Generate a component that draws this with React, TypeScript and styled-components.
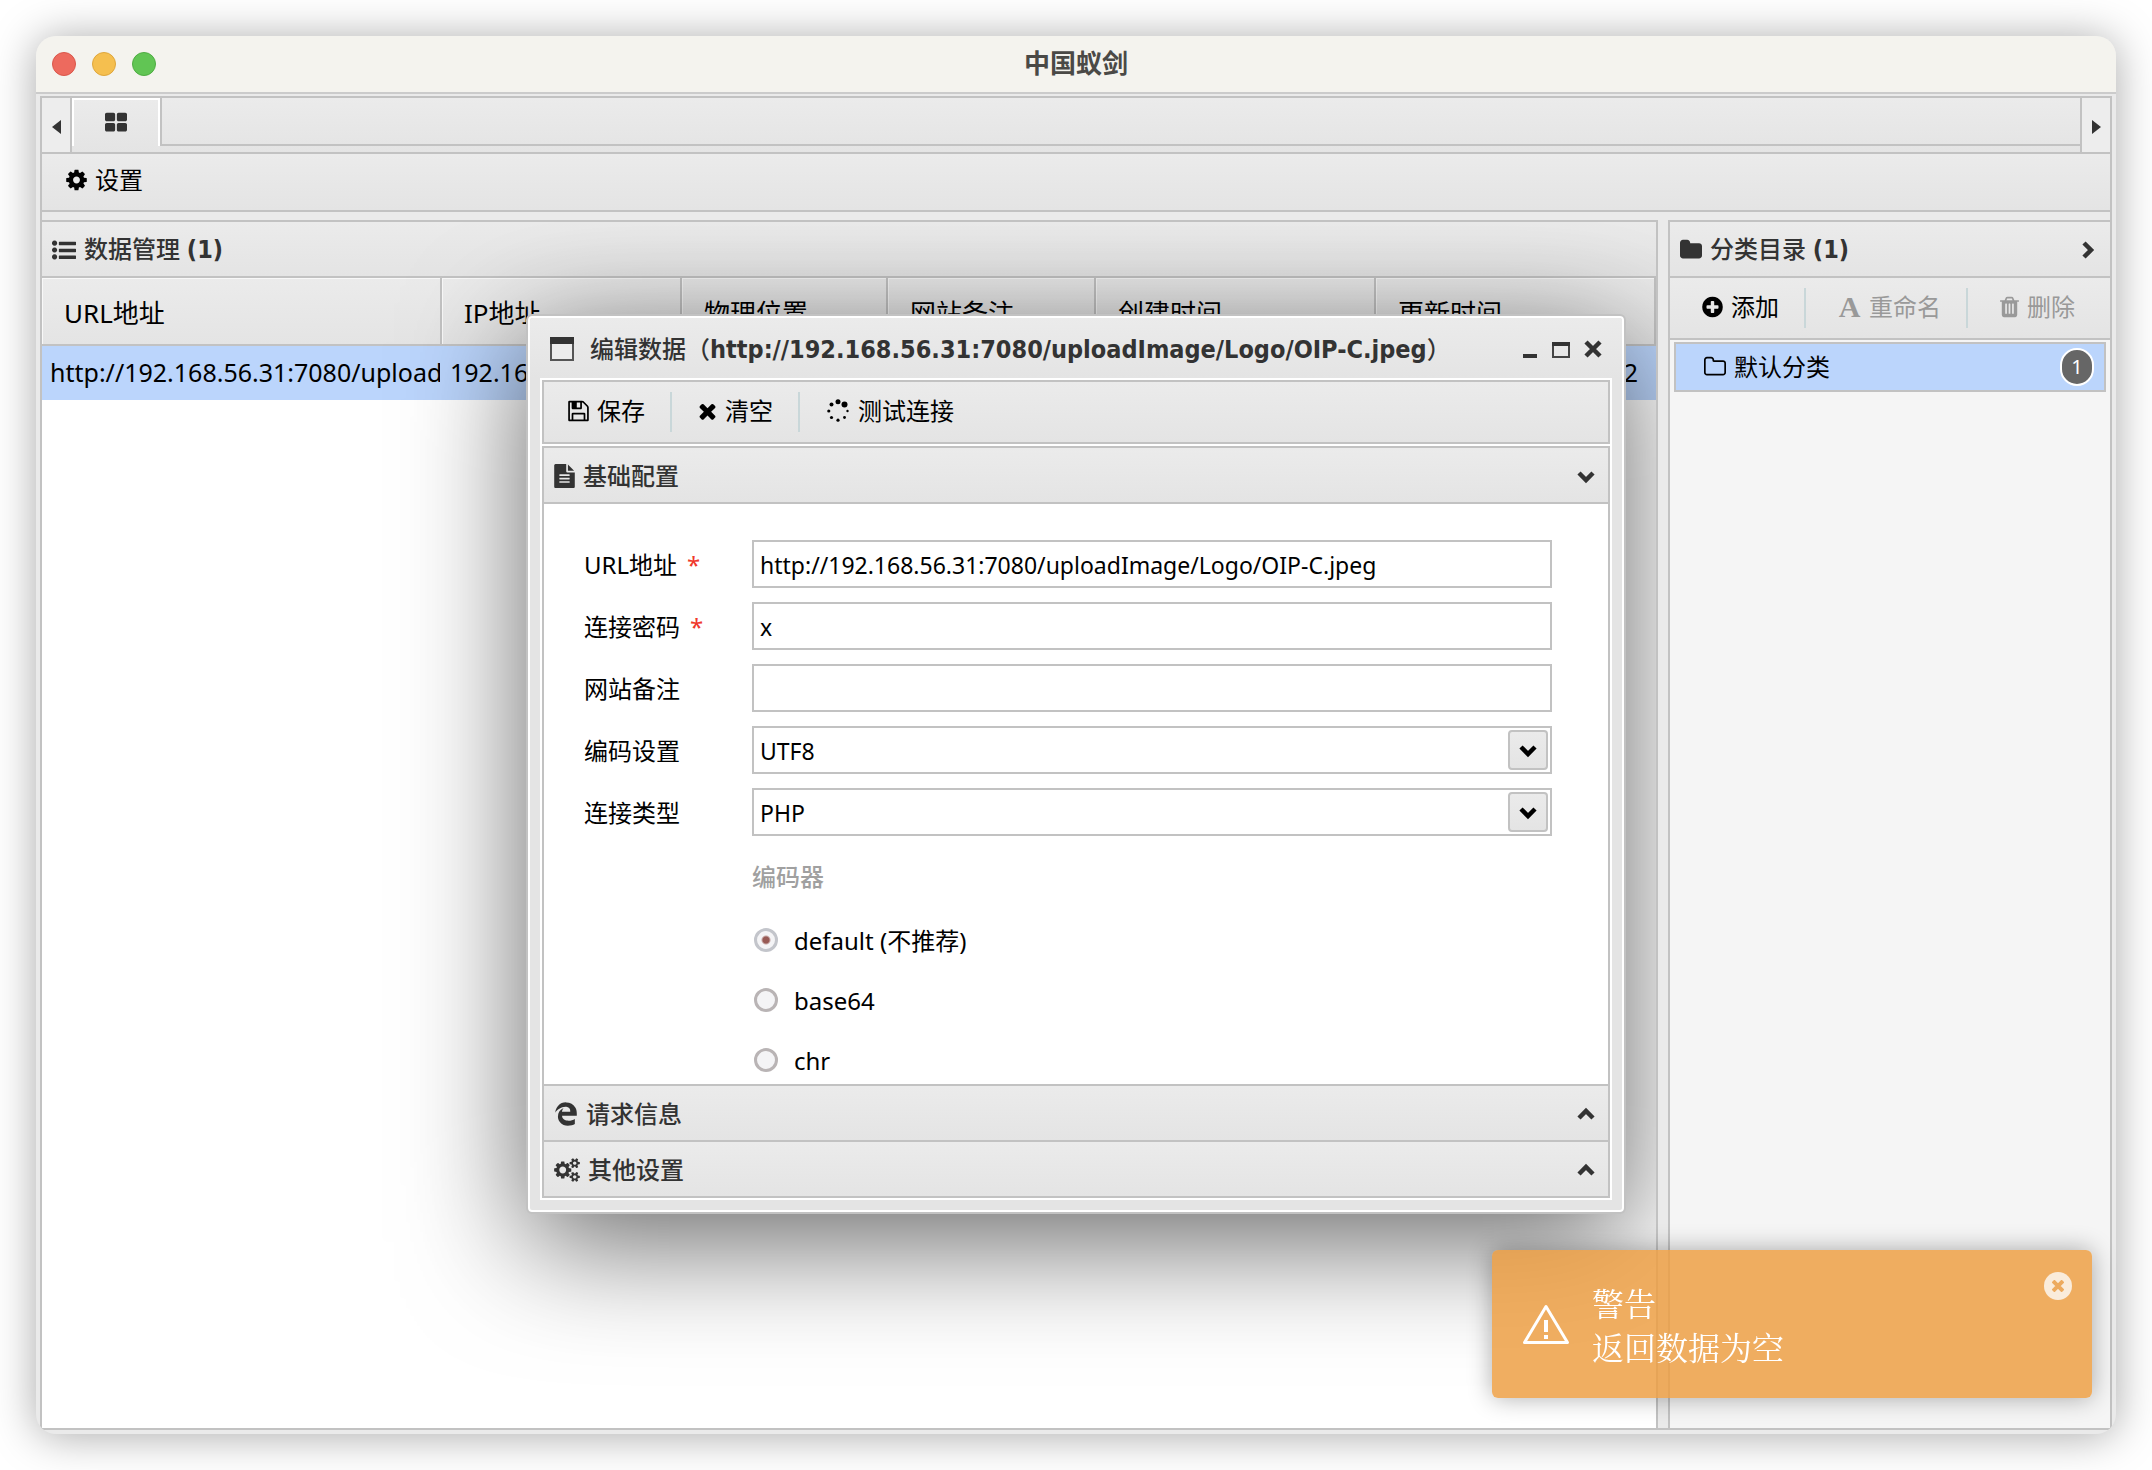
import React, { useState } from "react";
import styled, { createGlobalStyle, css } from "styled-components";
import { FaEdgeLegacy } from "react-icons/fa";

const line = "#c2c2c2";
const sans = '"Noto Sans", "Noto Sans CJK SC", sans-serif';
const strong = '"DejaVu Sans Condensed", "Noto Sans CJK SC", sans-serif';
const bar = "linear-gradient(#ebebeb, #e4e4e4)";

const GlobalStyle = createGlobalStyle`
  *, *::before, *::after { box-sizing: border-box; }
  body { margin: 0; background: #fff; font-family: ${sans}; font-size: 24px; line-height: 32px; color: #000; }
  button, input, select { font: inherit; color: inherit; margin: 0; }
  svg { display: block; flex: none; }
`;

/* ---------- icons ---------- */

const glyphs = {
  cog: [1536, "M1152 896q0-106-75-181t-181-75-181 75-75 181 75 181 181 75 181-75 75-181zm512-109v222q0 12-8 23t-20 13l-185 28q-19 54-39 91 35 50 107 138 10 12 10 25t-9 23q-27 37-99 108t-94 71q-12 0-26-9l-138-108q-44 23-91 38-16 136-29 186-7 28-36 28h-222q-14 0-24.5-8.5t-11.5-21.5l-28-184q-49-16-90-37l-141 107q-10 9-25 9-14 0-25-11-126-114-165-168-7-10-7-23 0-12 8-23 15-21 51-66.5t54-70.5q-27-50-41-99l-183-27q-13-2-21-12.5t-8-23.5v-222q0-12 8-23t19-13l186-28q14-46 39-92-40-57-107-138-10-12-10-24 0-10 9-23 26-36 98.5-107.5t94.5-71.5q13 0 26 10l138 107q44-23 91-38 16-136 29-186 7-28 36-28h222q14 0 24.5 8.5t11.5 21.5l28 184q49 16 90 37l142-107q9-9 24-9 13 0 25 10 129 119 165 170 7 8 7 22 0 12-8 23-15 21-51 66.5t-54 70.5q26 50 41 98l183 28q13 2 21 12.5t8 23.5z"],
  grid: [1664, "M832 1024v384q0 52-38 90t-90 38h-512q-52 0-90-38t-38-90v-384q0-52 38-90t90-38h512q52 0 90 38t38 90zm0-768v384q0 52-38 90t-90 38h-512q-52 0-90-38t-38-90v-384q0-52 38-90t90-38h512q52 0 90 38t38 90zm896 768v384q0 52-38 90t-90 38h-512q-52 0-90-38t-38-90v-384q0-52 38-90t90-38h512q52 0 90 38t38 90zm0-768v384q0 52-38 90t-90 38h-512q-52 0-90-38t-38-90v-384q0-52 38-90t90-38h512q52 0 90 38t38 90z"],
  list: [1792, "M192 1216a192 192 0 1 0 0.1 0zM192 704a192 192 0 1 0 0.1 0zM192 192a192 192 0 1 0 0.1 0zM544 1312h1216q32 0 32 32v192q0 32-32 32h-1216q-32 0-32-32v-192q0-32 32-32zM544 800h1216q32 0 32 32v192q0 32-32 32h-1216q-32 0-32-32v-192q0-32 32-32zM544 288h1216q32 0 32 32v192q0 32-32 32h-1216q-32 0-32-32v-192q0-32 32-32z"],
  folder: [1664, "M1728 608v704q0 92-66 158t-158 66h-1216q-92 0-158-66t-66-158v-960q0-92 66-158t158-66h320q92 0 158 66t66 158v32h672q92 0 158 66t66 158z"],
  folderOpen: [1664, "M1600 1312v-704q0-40-28-68t-68-28h-704q-40 0-68-28t-28-68v-64q0-40-28-68t-68-28h-320q-40 0-68 28t-28 68v960q0 40 28 68t68 28h1216q40 0 68-28t28-68zm128-704v704q0 92-66 158t-158 66h-1216q-92 0-158-66t-66-158v-960q0-92 66-158t158-66h320q92 0 158 66t66 158v32h672q92 0 158 66t66 158z"],
  plus: [1536, "M1344 960v-128q0-26-19-45t-45-19h-256v-256q0-26-19-45t-45-19h-128q-26 0-45 19t-19 45v256h-256q-26 0-45 19t-19 45v128q0 26 19 45t45 19h256v256q0 26 19 45t45 19h128q26 0 45-19t19-45v-256h256q26 0 45-19t19-45zm320-64q0 209-103 385.5t-279.5 279.5-385.5 103-385.5-103-279.5-279.5-103-385.5 103-385.5 279.5-279.5 385.5-103 385.5 103 279.5 279.5 103 385.5z"],
  times: [1408, "M1490 1322q0 40-28 68l-136 136q-28 28-68 28t-68-28l-294-294-294 294q-28 28-68 28t-68-28l-136-136q-28-28-28-68t28-68l294-294-294-294q-28-28-28-68t28-68l136-136q28-28 68-28t68 28l294 294 294-294q28-28 68-28t68 28l136 136q28 28 28 68t-28 68l-294 294 294 294q28 28 28 68z"],
  save: [1536, "M512 1536h768v-384h-768v384zm896 0h128v-896q0-14-10-38.5t-20-34.5l-281-281q-10-10-34-20t-39-10v416q0 40-28 68t-68 28h-576q-40 0-68-28t-28-68v-416h-128v1280h128v-416q0-40 28-68t68-28h832q40 0 68 28t28 68v416zm-384-928v-320q0-13-9.500-22.500t-22.500-9.500h-192q-13 0-22.500 9.500t-9.500 22.500v320q0 13 9.500 22.500t22.500 9.500h192q13 0 22.500-9.500t9.500-22.500zm640 32v928q0 40-28 68t-68 28h-1344q-40 0-68-28t-28-68v-1344q0-40 28-68t68-28h928q40 0 88 20t76 48l280 280q28 28 48 76t20 88z"],
  file: [1536, "M1596 476q14 14 28 36h-472v-472q22 14 36 28zm-476 164h544v1056q0 40-28 68t-68 28h-1344q-40 0-68-28t-28-68v-1600q0-40 28-68t68-28h800v544q0 40 28 68t68 28zm160 736v-64q0-14-9-23t-23-9h-704q-14 0-23 9t-9 23v64q0 14 9 23t23 9h704q14 0 23-9t9-23zm0-256v-64q0-14-9-23t-23-9h-704q-14 0-23 9t-9 23v64q0 14 9 23t23 9h704q14 0 23-9t9-23zm0-256v-64q0-14-9-23t-23-9h-704q-14 0-23 9t-9 23v64q0 14 9 23t23 9h704q14 0 23-9t9-23z"],
  trash: [1408, "M704 1376v-704q0-14-9-23t-23-9h-64q-14 0-23 9t-9 23v704q0 14 9 23t23 9h64q14 0 23-9t9-23zm256 0v-704q0-14-9-23t-23-9h-64q-14 0-23 9t-9 23v704q0 14 9 23t23 9h64q14 0 23-9t9-23zm256 0v-704q0-14-9-23t-23-9h-64q-14 0-23 9t-9 23v704q0 14 9 23t23 9h64q14 0 23-9t9-23zm-544-992h448l-48-117q-7-9-17-11h-317q-10 2-17 11zm928 32v64q0 14-9 23t-23 9h-96v948q0 83-47 143.500t-113 60.500h-832q-66 0-113-58.500t-47-141.500v-952h-96q-14 0-23-9t-9-23v-64q0-14 9-23t23-9h309l70-167q15-37 54-63t79-26h320q40 0 79 26t54 63l70 167h309q14 0 23 9t9 23z"],
} as const;

type GlyphName = keyof typeof glyphs;

function Glyph({ name }: { name: GlyphName }) {
  const [width, d] = glyphs[name];
  return (
    <svg
      width={Math.round((width / 1792) * 24)}
      height={24}
      viewBox={`${(1792 - width) / 2} 0 ${width} 1792`}
      fill="currentColor"
      aria-hidden="true"
    >
      <path d={d} />
    </svg>
  );
}

const cogsPath =
  "M896 896q0-106-75-181t-181-75-181 75-75 181 75 181 181 75 181-75 75-181zm768 512q0-52-38-90t-90-38-90 38-38 90q0 53 37.5 90.5t90.5 37.5 90.5-37.5 37.5-90.5zm0-1024q0-52-38-90t-90-38-90 38-38 90q0 53 37.5 90.5t90.5 37.5 90.5-37.5 37.5-90.5zm-384 421v185q0 10-7 19.5t-16 10.5l-155 24q-11 35-32 76 34 48 90 115 7 11 7 20 0 12-7 19-23 30-82.5 89.5t-78.5 59.5q-11 0-21-7l-115-90q-37 19-77 31-11 108-23 155-7 24-30 24h-186q-11 0-20-7.5t-10-17.5l-23-153q-34-10-75-31l-118 89q-7 7-20 7-11 0-21-8-144-133-144-160 0-9 7-19 10-14 41-53t47-61q-23-44-35-82l-152-24q-10-1-17-9.5t-7-19.5v-185q0-10 7-19.5t16-10.5l155-24q11-35 32-76-34-48-90-115-7-11-7-20 0-12 7-20 22-30 82-89t79-59q11 0 21 7l115 90q34-18 77-32 11-108 23-154 7-24 30-24h186q11 0 20 7.5t10 17.5l23 153q34 10 75 31l118-89q8-7 20-7 11 0 21 8 144 133 144 160 0 8-7 19-12 16-42 54t-45 60q23 48 34 82l152 23q10 2 17 10.5t7 19.5zm640 533v140q0 16-149 31-12 27-30 52 51 113 51 138 0 4-4 7-122 71-124 71-8 0-46-47t-52-68q-20 2-30 2t-30-2q-14 21-52 68t-46 47q-2 0-124-71-4-3-4-7 0-25 51-138-18-25-30-52-149-15-149-31v-140q0-16 149-31 13-29 30-52-51-113-51-138 0-4 4-7 4-2 35-20t59-34 30-16q8 0 46 46.5t52 67.5q20-2 30-2t30 2q51-71 92-112l6-2q4 0 124 70 4 3 4 7 0 25-51 138 17 23 30 52 149 15 149 31zm0-1024v140q0 16-149 31-12 27-30 52 51 113 51 138 0 4-4 7-122 71-124 71-8 0-46-47t-52-68q-20 2-30 2t-30-2q-14 21-52 68t-46 47q-2 0-124-71-4-3-4-7 0-25 51-138-18-25-30-52-149-15-149-31v-140q0-16 149-31 13-29 30-52-51-113-51-138 0-4 4-7 4-2 35-20t59-34 30-16q8 0 46 46.5t52 67.5q20-2 30-2t30 2q51-71 92-112l6-2q4 0 124 70 4 3 4 7 0 25-51 138 17 23 30 52 149 15 149 31z";

const CogsIcon = () => (
  <svg width={26} height={24} viewBox="0 0 1920 1792" fill="currentColor" aria-hidden="true">
    <path d={cogsPath} />
  </svg>
);

const SpinnerIcon = () => (
  <svg width={24} height={24} viewBox="0 0 24 24" fill="currentColor" aria-hidden="true">
    <circle cx="12" cy="2.800" r="2.500" />
    <circle cx="18.500" cy="5.500" r="3" />
    <circle cx="21.500" cy="12" r="1.200" />
    <circle cx="18.500" cy="18.500" r="1.400" />
    <circle cx="12" cy="21.200" r="1.600" />
    <circle cx="5.500" cy="18.500" r="1.600" />
    <circle cx="2.800" cy="12" r="1.600" />
    <circle cx="5.500" cy="5.500" r="2" />
  </svg>
);

const WindowIcon = () => (
  <svg width={24} height={24} viewBox="0 0 24 24" aria-hidden="true">
    <rect x="1" y="1" width="22" height="22" fill="#ececec" stroke="#555" strokeWidth="2" />
    <rect width="24" height="7" fill="#333" />
  </svg>
);

const Chevron = ({ dir, color = "#333" }: { dir: "up" | "down" | "right"; color?: string }) => {
  const points = { up: "3,14 10,7 17,14", down: "3,7 10,14 17,7", right: "6,3 13,10 6,17" }[dir];
  return (
    <svg width={20} height={20} viewBox="0 0 20 20" fill="none" stroke={color} strokeWidth="4.500" aria-hidden="true">
      <polyline points={points} />
    </svg>
  );
};

const Triangle = ({ dir }: { dir: "left" | "right" }) => (
  <svg width={9} height={14} viewBox="0 0 9 14" fill="#333" aria-hidden="true">
    <path d={dir === "left" ? "M9 0v14L0 7z" : "M0 0v14l9-7z"} />
  </svg>
);

/* ---------- application window ---------- */

const Frame = styled.div`
  margin: 36px;
  min-height: calc(100vh - 72px);
  display: flex;
  flex-direction: column;
  border-radius: 20px;
  overflow: clip;
  background: #eaeaea;
  box-shadow: 0 2px 44px rgba(0, 0, 0, 0.34);
`;

const Backdrop = styled.div`
  display: flow-root;
`;

const TitleBar = styled.header`
  display: grid;
  grid-template-columns: 1fr auto 1fr;
  align-items: center;
  height: 58px;
  padding: 0 16px;
  background: #f4f3ee;
  border-bottom: 2px solid #cbcbcb;
`;

const Lights = styled.div`
  display: flex;
  gap: 16px;
`;

const Light = styled.button<{ $fill: string; $edge: string }>`
  width: 24px;
  height: 24px;
  padding: 0;
  border: 1px solid ${(p) => p.$edge};
  border-radius: 50%;
  background: ${(p) => p.$fill};
`;

const AppTitle = styled.h1`
  margin: 0;
  padding-bottom: 2px;
  font-size: 26px;
  font-weight: 700;
  line-height: 36px;
  color: #4a4946;
`;

const Shell = styled.main`
  flex: 1;
  display: flex;
  flex-direction: column;
  margin: 2px 4px 4px;
  border: 2px solid ${line};
`;

const TabStrip = styled.nav`
  display: flex;
  height: 56px;
  border-bottom: 2px solid ${line};
  background: ${bar};
`;

const Scroller = styled.button<{ $side: "left" | "right" }>`
  display: flex;
  align-items: center;
  justify-content: center;
  width: 30px;
  padding: 4px 0 0;
  border: 0;
  border-${(p) => (p.$side === "left" ? "right" : "left")}: 2px solid ${line};
  background: #ededed;
`;

const TabButton = styled.button`
  display: flex;
  align-items: center;
  justify-content: center;
  width: 88px;
  height: 48px;
  padding: 0;
  border: 2px solid #fff;
  border-bottom: 0;
  background: transparent;
  color: #333;
  box-shadow: 2px 0 0 ${line};
`;

const TabRest = styled.div`
  flex: 1;
  height: 48px;
  margin-left: 2px;
  border-bottom: 2px solid ${line};
`;

const Toolbar = styled.div<{ $height: number }>`
  display: flex;
  align-items: center;
  height: ${(p) => p.$height}px;
  border-bottom: 2px solid ${line};
  background: ${bar};
`;

const MenuBar = styled(Toolbar)`
  padding-bottom: 2px;
`;

const ToolButton = styled.button<{ $left: number }>`
  display: flex;
  align-items: center;
  gap: 8px;
  height: 40px;
  padding: 0 25px 2px ${(p) => p.$left}px;
  border: 0;
  background: transparent;
  white-space: nowrap;
  &:disabled {
    color: #999;
  }
  & + & {
    border-left: 2px solid #c9d7d9;
  }
`;

const LetterIcon = styled.span`
  width: 23px;
  font: bold 30px/24px "Liberation Serif", serif;
  text-align: center;
`;

const Columns = styled.div`
  flex: 1;
  display: flex;
  gap: 10px;
  padding-top: 8px;
`;

const DataPane = styled.section`
  position: relative;
  flex: 1;
  min-width: 0;
  overflow: hidden;
  border-top: 2px solid ${line};
  border-right: 2px solid ${line};
  background: #fff;
`;

const SidePane = styled.aside`
  flex: none;
  width: 442px;
  border-top: 2px solid ${line};
  border-left: 2px solid ${line};
  background: #f5f5f5;
`;

const heading = css`
  font-family: ${strong};
  font-size: 24px;
  font-weight: 500;
  line-height: 32px;
  color: #333;
  b {
    font-size: 25px;
    font-weight: 700;
  }
`;

const PaneTitle = styled.h2`
  display: flex;
  align-items: center;
  gap: 8px;
  height: 56px;
  margin: 0;
  padding: 2px 12px 0 10px;
  border-bottom: 2px solid ${line};
  background: ${bar};
  ${heading}
`;

const Caption = styled.span`
  flex: 1;
`;

const PlainButton = styled.button`
  display: flex;
  padding: 0;
  border: 0;
  background: none;
`;

const Grid = styled.table`
  width: 100%;
  table-layout: fixed;
  border-collapse: separate;
  border-spacing: 0;
  font-size: 26px;
  line-height: 36px;
`;

const HeadCell = styled.th`
  height: 68px;
  padding: 4px 0 0 22px;
  border-right: 2px solid ${line};
  border-bottom: 2px solid ${line};
  box-shadow: inset 1px 1px 0 #f8f8f8;
  background: ${bar};
  font-weight: 400;
  text-align: left;
  white-space: nowrap;
`;

const Cell = styled.td<{ $end?: boolean }>`
  height: 54px;
  padding: 0 ${(p) => (p.$end ? 16 : 0)}px 2px 8px;
  border-right: 2px solid transparent;
  background: #bbd5fc;
  background-clip: border-box;
  font-size: 25px;
  text-align: ${(p) => (p.$end ? "right" : "left")};
  overflow: hidden;
  white-space: nowrap;
`;

const CategoryButton = styled.button`
  display: flex;
  align-items: center;
  gap: 8px;
  width: calc(100% - 8px);
  height: 50px;
  margin: 2px 4px;
  padding: 0 10px 0 28px;
  border: 2px solid ${line};
  background: #bbd5fc;
  text-align: left;
`;

const Badge = styled.span`
  width: 34px;
  height: 38px;
  border: 2px solid #fff;
  border-radius: 17px;
  background: #666;
  color: #fff;
  font-size: 20px;
  line-height: 34px;
  text-align: center;
`;

/* ---------- edit dialog ---------- */

const Dialog = styled.div`
  position: absolute;
  top: 92px;
  left: 484px;
  width: 1100px;
  border: 2px solid ${line};
  border-radius: 6px;
  background: #e4e4e4;
  box-shadow: inset 0 0 0 2px #fff, 0 28px 120px rgba(0, 0, 0, 0.6);
  padding: 2px 14px 14px;
`;

const DialogTitle = styled.div`
  display: flex;
  align-items: center;
  gap: 16px;
  height: 60px;
  margin: 0 -12px 2px;
  padding: 2px 20px 0;
  border-radius: 4px 4px 0 0;
  background: ${bar};
`;

const DialogName = styled.h2`
  flex: 1;
  margin: 0;
  padding-top: 2px;
  ${heading}
`;

const WindowButtons = styled.div`
  display: flex;
  gap: 14px;
`;

const DialogBody = styled.div`
  outline: 2px solid #fff;
  background: #fff;
`;

const DialogTools = styled(Toolbar)`
  margin-bottom: 2px;
  border: 2px solid ${line};
`;

const Accordion = styled.div`
  border: 2px solid ${line};
`;

const AccordionHead = styled.button<{ $last?: boolean }>`
  display: flex;
  align-items: center;
  gap: 8px;
  width: 100%;
  height: ${(p) => (p.$last ? 54 : 56)}px;
  padding: 2px 12px 0 10px;
  border: 0;
  border-bottom: ${(p) => (p.$last ? 0 : 2)}px solid ${line};
  background: ${bar};
  font-weight: 500;
  color: #333;
  text-align: left;
`;

const FormArea = styled.form`
  display: flex;
  flex-direction: column;
  gap: 14px;
  height: 582px;
  padding: 36px 56px 0 40px;
  border-bottom: 2px solid ${line};
  overflow: hidden;
`;

const Field = styled.div`
  display: grid;
  grid-template-columns: 168px 1fr;
  align-items: center;
`;

const FieldLabel = styled.label`
  padding-top: 2px;
`;

const control = css`
  width: 100%;
  height: 48px;
  padding: 2px 6px 0 6px;
  border: 2px solid ${line};
  border-radius: 0;
  background: #fff;
  font-size: 23px;
  line-height: 32px;
`;

const Star = styled.span`
  margin-left: 10px;
  color: #f0392b;
`;

const TextBox = styled.input`
  ${control}
`;

const Picker = styled.div`
  display: grid;
  align-items: center;
  > * {
    grid-area: 1 / 1;
  }
`;

const Select = styled.select`
  ${control}
  appearance: none;
`;

const PickerArrow = styled.span`
  display: flex;
  align-items: center;
  justify-content: center;
  justify-self: end;
  width: 40px;
  height: 40px;
  margin-right: 4px;
  border: 2px solid ${line};
  border-radius: 4px;
  background: ${bar};
  pointer-events: none;
`;

const RadioGroup = styled.fieldset`
  margin: 0 0 0 168px;
  padding: 0;
  border: 0;
`;

const Legend = styled.legend`
  padding: 11px 0 18px;
  color: #a0a0a0;
  font-weight: 500;
`;

const RadioLabel = styled.label`
  display: flex;
  align-items: center;
  gap: 16px;
  height: 60px;
  padding-left: 2px;
`;

const Radio = styled.input`
  appearance: none;
  width: 24px;
  height: 24px;
  margin-bottom: 2px;
  border: 3px solid #b9b4b5;
  border-radius: 50%;
  background: #f4f4f6;
  &:checked {
    border-color: #c3c5cb;
    background: radial-gradient(circle, #985a55 3px, #f4f4f6 5px);
  }
`;

/* ---------- notification ---------- */

const Toast = styled.div`
  position: fixed;
  right: 60px;
  bottom: 72px;
  display: flex;
  align-items: center;
  gap: 22px;
  width: 600px;
  height: 148px;
  padding: 0 20px 0 30px;
  border-radius: 6px;
  background: rgba(237, 157, 65, 0.83);
  box-shadow: 0 0 24px rgba(0, 0, 0, 0.32);
  color: #fff;
  font-family: "Liberation Serif", "Noto Serif CJK SC", "Noto Sans CJK SC", serif;
  font-size: 32px;
  line-height: 44px;
`;

const ToastText = styled.div`
  flex: 1;
  padding-top: 6px;
  font-weight: 400;
`;

const ToastClose = styled.button`
  align-self: flex-start;
  display: flex;
  align-items: center;
  justify-content: center;
  width: 28px;
  height: 28px;
  margin-top: 22px;
  padding: 0;
  border: 0;
  border-radius: 50%;
  background: #faecdb;
`;

const headers: [string, number | undefined][] = [
  ["URL地址", 400],
  ["IP地址", 240],
  ["物理位置", 206],
  ["网站备注", 208],
  ["创建时间", 280],
  ["更新时间", undefined],
];

const row = ["http://192.168.56.31:7080/uploadImage", "192.168.56.31", "", "", "", "2023/03/20 21:22:32"];

const encoders = ["default (不推荐)", "base64", "chr"];

function EditDialog() {
  const [url, setUrl] = useState("http://192.168.56.31:7080/uploadImage/Logo/OIP-C.jpeg");
  const [password, setPassword] = useState("x");
  const [note, setNote] = useState("");
  const [encoder, setEncoder] = useState(encoders[0]);
  return (
    <Dialog role="dialog" aria-labelledby="dialog-name">
      <DialogTitle>
        <WindowIcon />
        <DialogName id="dialog-name">
          编辑数据（<b>http://192.168.56.31:7080/uploadImage/Logo/OIP-C.jpeg</b>）
        </DialogName>
        <WindowButtons>
          <PlainButton aria-label="最小化">
            <svg width={16} height={20} viewBox="0 0 16 20">
              <rect x="1" y="15" width="14" height="4" fill="#333" />
            </svg>
          </PlainButton>
          <PlainButton aria-label="最大化">
            <svg width={18} height={20} viewBox="0 0 18 20">
              <rect x="1" y="4" width="16" height="14" fill="none" stroke="#444" strokeWidth="2" />
              <rect y="3" width="18" height="4" fill="#333" />
            </svg>
          </PlainButton>
          <PlainButton aria-label="关闭">
            <svg width={18} height={20} viewBox="0 0 18 20" stroke="#333" strokeWidth="4.500">
              <path d="M2 3l14 14M16 3L2 17" />
            </svg>
          </PlainButton>
        </WindowButtons>
      </DialogTitle>
      <DialogBody>
        <DialogTools $height={64}>
          <ToolButton $left={24}>
            <Glyph name="save" />
            保存
          </ToolButton>
          <ToolButton $left={26}>
            <Glyph name="times" />
            清空
          </ToolButton>
          <ToolButton $left={26}>
            <SpinnerIcon />
            测试连接
          </ToolButton>
        </DialogTools>
        <Accordion>
          <AccordionHead aria-expanded="true">
            <Glyph name="file" />
            <Caption>基础配置</Caption>
            <Chevron dir="down" />
          </AccordionHead>
          <FormArea>
            <Field>
              <FieldLabel htmlFor="url">
                URL地址<Star>*</Star>
              </FieldLabel>
              <TextBox id="url" value={url} onChange={(e) => setUrl(e.target.value)} />
            </Field>
            <Field>
              <FieldLabel htmlFor="password">
                连接密码<Star>*</Star>
              </FieldLabel>
              <TextBox id="password" value={password} onChange={(e) => setPassword(e.target.value)} />
            </Field>
            <Field>
              <FieldLabel htmlFor="note">网站备注</FieldLabel>
              <TextBox id="note" value={note} onChange={(e) => setNote(e.target.value)} />
            </Field>
            <Field>
              <FieldLabel htmlFor="charset">编码设置</FieldLabel>
              <Picker>
                <Select id="charset">
                  <option>UTF8</option>
                </Select>
                <PickerArrow>
                  <Chevron dir="down" color="#000" />
                </PickerArrow>
              </Picker>
            </Field>
            <Field>
              <FieldLabel htmlFor="kind">连接类型</FieldLabel>
              <Picker>
                <Select id="kind">
                  <option>PHP</option>
                </Select>
                <PickerArrow>
                  <Chevron dir="down" color="#000" />
                </PickerArrow>
              </Picker>
            </Field>
            <RadioGroup>
              <Legend>编码器</Legend>
              {encoders.map((name) => (
                <RadioLabel key={name}>
                  <Radio type="radio" name="encoder" checked={encoder === name} onChange={() => setEncoder(name)} />
                  {name}
                </RadioLabel>
              ))}
            </RadioGroup>
          </FormArea>
          <AccordionHead aria-expanded="false">
            <FaEdgeLegacy size={24} aria-hidden="true" />
            <Caption>请求信息</Caption>
            <Chevron dir="up" />
          </AccordionHead>
          <AccordionHead $last aria-expanded="false">
            <CogsIcon />
            <Caption>其他设置</Caption>
            <Chevron dir="up" />
          </AccordionHead>
        </Accordion>
      </DialogBody>
    </Dialog>
  );
}

export default function App() {
  return (
    <Backdrop>
      <GlobalStyle />
      <Frame>
        <TitleBar>
          <Lights>
            <Light $fill="#ed6a5e" $edge="#d9574b" aria-label="关闭窗口" />
            <Light $fill="#f5bf4f" $edge="#dea63c" aria-label="最小化窗口" />
            <Light $fill="#61c554" $edge="#4fac43" aria-label="缩放窗口" />
          </Lights>
          <AppTitle>中国蚁剑</AppTitle>
        </TitleBar>
        <Shell>
          <TabStrip>
            <Scroller $side="left" aria-label="向左滚动">
              <Triangle dir="left" />
            </Scroller>
            <TabButton aria-label="主页">
              <Glyph name="grid" />
            </TabButton>
            <TabRest />
            <Scroller $side="right" aria-label="向右滚动">
              <Triangle dir="right" />
            </Scroller>
          </TabStrip>
          <MenuBar $height={58}>
            <ToolButton $left={24}>
              <Glyph name="cog" />
              设置
            </ToolButton>
          </MenuBar>
          <Columns>
            <DataPane>
              <PaneTitle>
                <Glyph name="list" />
                <Caption>
                  数据管理 <b>(1)</b>
                </Caption>
              </PaneTitle>
              <Grid>
                <colgroup>
                  {headers.map(([name, width]) => (
                    <col key={name} width={width} />
                  ))}
                </colgroup>
                <thead>
                  <tr>
                    {headers.map(([name]) => (
                      <HeadCell key={name}>{name}</HeadCell>
                    ))}
                  </tr>
                </thead>
                <tbody>
                  <tr>
                    {row.map((value, i) => (
                      <Cell key={i} $end={i === row.length - 1}>
                        {value}
                      </Cell>
                    ))}
                  </tr>
                </tbody>
              </Grid>
              <EditDialog />
            </DataPane>
            <SidePane>
              <PaneTitle>
                <Glyph name="folder" />
                <Caption>
                  分类目录 <b>(1)</b>
                </Caption>
                <PlainButton aria-label="收起">
                  <Chevron dir="right" />
                </PlainButton>
              </PaneTitle>
              <Toolbar $height={62}>
                <ToolButton $left={32}>
                  <Glyph name="plus" />
                  添加
                </ToolButton>
                <ToolButton $left={32} disabled>
                  <LetterIcon aria-hidden="true">A</LetterIcon>
                  重命名
                </ToolButton>
                <ToolButton $left={32} disabled>
                  <Glyph name="trash" />
                  删除
                </ToolButton>
              </Toolbar>
              <CategoryButton>
                <Glyph name="folderOpen" />
                <Caption>默认分类</Caption>
                <Badge>1</Badge>
              </CategoryButton>
            </SidePane>
          </Columns>
        </Shell>
      </Frame>
      <Toast role="alert">
        <svg width={48} height={42} viewBox="0 0 48 42" fill="none" stroke="#fff" strokeWidth="3" aria-hidden="true">
          <path d="M24 3.500L45.500 39.500H2.500z" strokeLinejoin="round" />
          <path d="M24 17v12M24 32v4" strokeWidth="4" />
        </svg>
        <ToastText>
          警告
          <br />
          返回数据为空
        </ToastText>
        <ToastClose aria-label="关闭通知">
          <svg width={12} height={12} viewBox="0 0 12 12" stroke="#edab5f" strokeWidth="4" aria-hidden="true">
            <path d="M1 1l10 10M11 1L1 11" />
          </svg>
        </ToastClose>
      </Toast>
    </Backdrop>
  );
}
